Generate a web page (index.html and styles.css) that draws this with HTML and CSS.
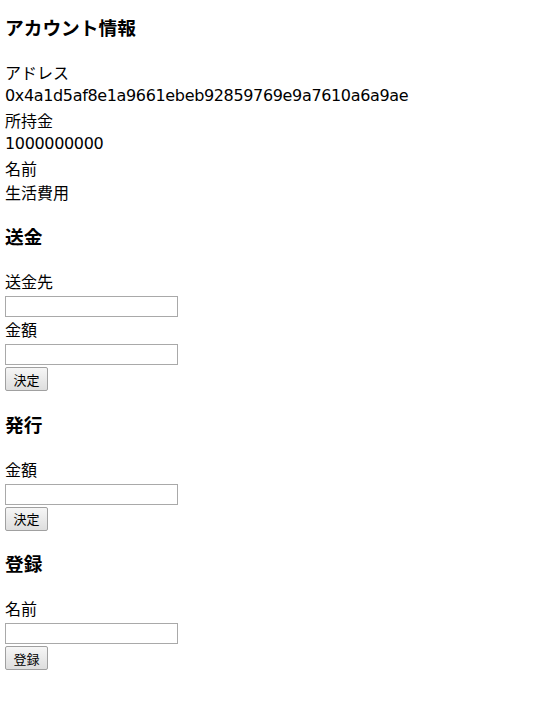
FILE: index.html
```html
<!DOCTYPE html>
<html lang="ja">
<head>
  <meta charset="UTF-8">
  <meta name="viewport" content="width=device-width, initial-scale=1.0">
  <title>アカウント情報</title>
  <link rel="stylesheet" href="styles.css">
</head>
<body>
  <h3 class="first">アカウント情報</h3>
  <div>アドレス</div>
  <div class="latin">0x4a1d5af8e1a9661ebeb92859769e9a7610a6a9ae</div>
  <div>所持金</div>
  <div class="latin">1000000000</div>
  <div>名前</div>
  <div>生活費用</div>

  <h3>送金</h3>
  <form class="form">
    <label for="to">送金先</label>
    <input type="text" id="to">
    <label for="amount">金額</label>
    <input type="text" id="amount">
    <button type="button">決定</button>
  </form>

  <h3>発行</h3>
  <form class="form">
    <label for="issue">金額</label>
    <input type="text" id="issue">
    <button type="button">決定</button>
  </form>

  <h3>登録</h3>
  <form class="form">
    <label for="name">名前</label>
    <input type="text" id="name">
    <button type="button">登録</button>
  </form>
</body>
</html>
```

FILE: styles.css
```css
body {
  margin: 0;
  padding: 0 5px;
  font-family: "Noto Sans CJK JP", sans-serif;
  font-size: 16px;
  line-height: 24px;
  color: #000;
}
.latin {
  font-family: "DejaVu Sans", sans-serif;
  letter-spacing: -0.35px;
}
h3 {
  font-size: 18.72px;
  line-height: 28px;
  margin: 18.72px 0;
}
h3.first {
  margin-top: 13px;
}
.form label {
  display: block;
}
.form input {
  display: block;
  box-sizing: border-box;
  width: 173px;
  height: 21px;
  margin: 3px 0 0;
  padding: 1px 2px;
  border: 1px solid #a9a9a9;
  font-size: 13px;
}
.form button {
  display: block;
  box-sizing: border-box;
  width: 43px;
  height: 24px;
  margin-top: 2px;
  padding: 0;
  border: 1px solid #a0a0a0;
  border-radius: 2px;
  background: linear-gradient(#f6f6f6, #dedede);
  font-family: "Noto Sans CJK JP", sans-serif;
  font-size: 13px;
  color: #000;
}
```
